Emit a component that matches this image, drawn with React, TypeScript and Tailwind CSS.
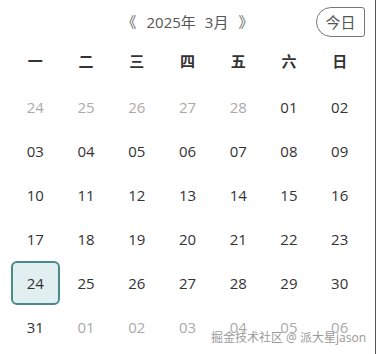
import { useState } from "react";

const weekDays = ["一", "二", "三", "四", "五", "六", "日"];

type Day = { label: string; current: boolean };

// March 2025, week starts on Monday
const buildDays = (): Day[] => {
  const days: Day[] = [];
  for (let d = 24; d <= 28; d++) days.push({ label: String(d), current: false });
  for (let d = 1; d <= 31; d++) days.push({ label: String(d).padStart(2, "0"), current: true });
  for (let d = 1; d <= 6; d++) days.push({ label: String(d).padStart(2, "0"), current: false });
  return days;
};

const days = buildDays();

export default function App() {
  const [selected, setSelected] = useState(28);

  return (
    <div
      className="relative w-[376px] h-[354px] bg-white border-r border-[#555] px-[10px] overflow-hidden"
      style={{ fontFamily: '"Open Sans", "Noto Sans", "Noto Sans CJK SC", sans-serif' }}
    >
      {/* Header */}
      <div className="relative h-[44px] flex items-center justify-center text-[15px] text-[#555]">
        <div className="flex items-center">
          <span className="text-[#666] mr-[10px] cursor-pointer">《</span>
          <span>2025年</span>
          <span className="ml-[9px]">3月</span>
          <span className="text-[#666] ml-[10px] cursor-pointer">》</span>
        </div>
        <button className="absolute right-0 top-[7px] h-[30px] w-[49px] border border-[#777] rounded-l-[15px] rounded-r-[3px] text-[15px] text-[#555] flex items-center justify-center">
          今日
        </button>
      </div>

      {/* Week days */}
      <div className="grid grid-cols-7 h-[34px] mb-[7px] items-center text-center text-[15px] font-bold text-[#333]">
        {weekDays.map((w) => (
          <div key={w}>{w}</div>
        ))}
      </div>

      {/* Dates */}
      <div className="grid grid-cols-7 text-[15px]">
        {days.map((d, i) => (
          <div key={i} className="h-[44px] px-[1px]">
            <button
              onClick={() => setSelected(i)}
              className={
                "w-full h-full rounded-[6px] border-2 flex items-center justify-center " +
                (i === selected ? "border-[#4b8a8c] bg-[#e2eff0] " : "border-transparent ") +
                (d.current ? "text-[#333]" : "text-[#aaa]")
              }
            >
              {d.label}
            </button>
          </div>
        ))}
      </div>

      {/* Watermark */}
      <div
        className="absolute right-[9px] top-[329px] text-[12px] text-[#9a9a9a] whitespace-nowrap pointer-events-none"
        style={{ textShadow: "0 0 1px #fff, 0 0 1px #fff" }}
      >
        掘金技术社区 @ 派大星jason
      </div>
    </div>
  );
}
